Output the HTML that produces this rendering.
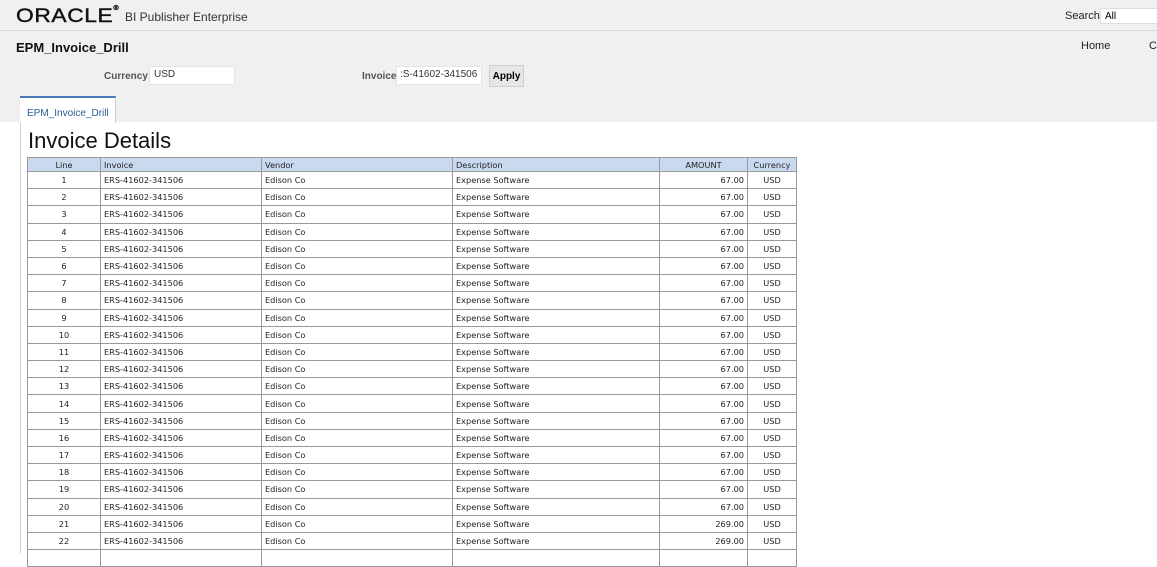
<!DOCTYPE html>
<html><head><meta charset="utf-8"><style>
body{margin:0;width:1157px;height:553px;overflow:hidden;background:#fff;font-family:"Liberation Sans",Arial,sans-serif;position:relative}
.top{position:absolute;left:0;top:0;width:1157px;height:122px;background:#f0f0f0}
.hdr{position:absolute;left:0;top:0;width:1157px;height:30px;border-bottom:1px solid #d8d8d8}
.logo{position:absolute;left:16px;top:6px;font-size:19px;letter-spacing:0.5px;color:#111;white-space:nowrap;-webkit-text-stroke:0.4px #111;transform:scaleX(1.2);transform-origin:left}
.bip{position:absolute;left:125px;top:10px;font-size:12px;color:#333}
.search{position:absolute;left:1065px;top:10px;font-size:11px;color:#222}
.sbox{position:absolute;left:1100px;top:8px;width:60px;height:16px;background:#fff;border:1px solid #ddd;font-size:10px;padding:2px 0 0 4px;box-sizing:border-box}
.title{position:absolute;left:16px;top:40px;font-size:13px;font-weight:bold;color:#111}
.home{position:absolute;left:1081px;top:40px;font-size:11px;color:#222}
.c{position:absolute;left:1149px;top:40px;font-size:11px;color:#222}
.lbl{position:absolute;font-size:10px;font-weight:bold;color:#555}
.inp{position:absolute;background:#fff;border:1px solid #e4e4e4;font-size:10px;color:#333;padding:2px 4px;box-sizing:border-box;height:19px;white-space:nowrap;overflow:hidden}
.btn{position:absolute;left:489px;top:65px;width:35px;height:22px;background:#e6e6e6;border:1px solid #d0d0d0;font-size:10px;font-weight:bold;text-align:center;line-height:21px;box-sizing:border-box}
.tab{position:absolute;left:20px;top:96px;width:96px;height:27px;background:#fff;border-top:2px solid #4a7ab8;border-right:1px solid #ccc;box-sizing:border-box;font-size:10px;color:#2a5d93;padding:10px 0 0 7px}
.panel{position:absolute;left:20px;top:122px;width:1px;height:431px;background:#d0d0d0}
h1{position:absolute;left:28px;top:128px;margin:0;font-size:22px;font-weight:normal;color:#111}
table{position:absolute;left:27px;top:157px;border-collapse:collapse;font-size:8.2px;color:#222;font-family:"DejaVu Sans",sans-serif;table-layout:fixed;width:769px}
td,th{border:1px solid #999;padding:0 3px;white-space:nowrap;overflow:hidden}
th{background:#c9daf0;font-weight:normal;height:13px;text-align:left}
td{height:16.2px}
.ct{text-align:center}.r{text-align:right}
</style></head><body>
<div class="top"></div>
<div class="hdr"></div>
<div class="logo">ORACLE<span style="font-size:6px;vertical-align:top">®</span></div>
<div class="bip">BI Publisher Enterprise</div>
<div class="search">Search</div><div class="sbox">All</div>
<div class="title">EPM_Invoice_Drill</div>
<div class="home">Home</div><div class="c">C</div>
<div class="lbl" style="left:104px;top:71px">Currency</div>
<div class="inp" style="left:149px;top:66px;width:86px">USD</div>
<div class="lbl" style="left:362px;top:71px">Invoice</div>
<div class="inp" style="left:396px;top:66px;width:86px;padding-left:3px">:S-41602-341506</div>
<div class="btn">Apply</div>
<div class="tab">EPM_Invoice_Drill</div>
<div class="panel"></div>
<h1>Invoice Details</h1>
<table>
<colgroup><col style="width:73px"><col style="width:161px"><col style="width:191px"><col style="width:207px"><col style="width:88px"><col style="width:49px"></colgroup>
<tr><th class="ct">Line</th><th>Invoice</th><th>Vendor</th><th>Description</th><th class="ct">AMOUNT</th><th class="ct">Currency</th></tr>
<tr><td class="ct">1</td><td>ERS-41602-341506</td><td>Edison Co</td><td>Expense Software</td><td class="r">67.00</td><td class="ct">USD</td></tr>
<tr><td class="ct">2</td><td>ERS-41602-341506</td><td>Edison Co</td><td>Expense Software</td><td class="r">67.00</td><td class="ct">USD</td></tr>
<tr><td class="ct">3</td><td>ERS-41602-341506</td><td>Edison Co</td><td>Expense Software</td><td class="r">67.00</td><td class="ct">USD</td></tr>
<tr><td class="ct">4</td><td>ERS-41602-341506</td><td>Edison Co</td><td>Expense Software</td><td class="r">67.00</td><td class="ct">USD</td></tr>
<tr><td class="ct">5</td><td>ERS-41602-341506</td><td>Edison Co</td><td>Expense Software</td><td class="r">67.00</td><td class="ct">USD</td></tr>
<tr><td class="ct">6</td><td>ERS-41602-341506</td><td>Edison Co</td><td>Expense Software</td><td class="r">67.00</td><td class="ct">USD</td></tr>
<tr><td class="ct">7</td><td>ERS-41602-341506</td><td>Edison Co</td><td>Expense Software</td><td class="r">67.00</td><td class="ct">USD</td></tr>
<tr><td class="ct">8</td><td>ERS-41602-341506</td><td>Edison Co</td><td>Expense Software</td><td class="r">67.00</td><td class="ct">USD</td></tr>
<tr><td class="ct">9</td><td>ERS-41602-341506</td><td>Edison Co</td><td>Expense Software</td><td class="r">67.00</td><td class="ct">USD</td></tr>
<tr><td class="ct">10</td><td>ERS-41602-341506</td><td>Edison Co</td><td>Expense Software</td><td class="r">67.00</td><td class="ct">USD</td></tr>
<tr><td class="ct">11</td><td>ERS-41602-341506</td><td>Edison Co</td><td>Expense Software</td><td class="r">67.00</td><td class="ct">USD</td></tr>
<tr><td class="ct">12</td><td>ERS-41602-341506</td><td>Edison Co</td><td>Expense Software</td><td class="r">67.00</td><td class="ct">USD</td></tr>
<tr><td class="ct">13</td><td>ERS-41602-341506</td><td>Edison Co</td><td>Expense Software</td><td class="r">67.00</td><td class="ct">USD</td></tr>
<tr><td class="ct">14</td><td>ERS-41602-341506</td><td>Edison Co</td><td>Expense Software</td><td class="r">67.00</td><td class="ct">USD</td></tr>
<tr><td class="ct">15</td><td>ERS-41602-341506</td><td>Edison Co</td><td>Expense Software</td><td class="r">67.00</td><td class="ct">USD</td></tr>
<tr><td class="ct">16</td><td>ERS-41602-341506</td><td>Edison Co</td><td>Expense Software</td><td class="r">67.00</td><td class="ct">USD</td></tr>
<tr><td class="ct">17</td><td>ERS-41602-341506</td><td>Edison Co</td><td>Expense Software</td><td class="r">67.00</td><td class="ct">USD</td></tr>
<tr><td class="ct">18</td><td>ERS-41602-341506</td><td>Edison Co</td><td>Expense Software</td><td class="r">67.00</td><td class="ct">USD</td></tr>
<tr><td class="ct">19</td><td>ERS-41602-341506</td><td>Edison Co</td><td>Expense Software</td><td class="r">67.00</td><td class="ct">USD</td></tr>
<tr><td class="ct">20</td><td>ERS-41602-341506</td><td>Edison Co</td><td>Expense Software</td><td class="r">67.00</td><td class="ct">USD</td></tr>
<tr><td class="ct">21</td><td>ERS-41602-341506</td><td>Edison Co</td><td>Expense Software</td><td class="r">269.00</td><td class="ct">USD</td></tr>
<tr><td class="ct">22</td><td>ERS-41602-341506</td><td>Edison Co</td><td>Expense Software</td><td class="r">269.00</td><td class="ct">USD</td></tr>
<tr><td class="ct"></td><td></td><td></td><td></td><td class="r"></td><td class="ct"></td></tr>
</table>
</body></html>
